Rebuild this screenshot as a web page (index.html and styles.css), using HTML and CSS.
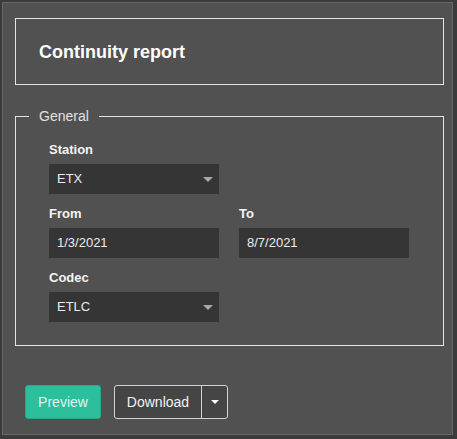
FILE: index.html
```html
<!DOCTYPE html>
<html lang="en">
<head>
    <meta charset="UTF-8">
    <meta name="viewport" content="width=device-width, initial-scale=1.0">
    <title>Continuity report</title>
    <link rel="stylesheet" href="styles.css">
</head>
<body>

    <div class="panel">
        <div class="title-box">
            <h1>Continuity report</h1>
        </div>

        <fieldset class="group">
            <legend>General</legend>
            <div class="form-grid">
                <div class="field">
                    <label>Station</label>
                    <div class="control select">ETX<span class="caret"></span></div>
                </div>
                <div></div>

                <div class="field">
                    <label>From</label>
                    <div class="control">1/3/2021</div>
                </div>
                <div class="field">
                    <label>To</label>
                    <div class="control">8/7/2021</div>
                </div>

                <div class="field">
                    <label>Codec</label>
                    <div class="control select">ETLC<span class="caret"></span></div>
                </div>
            </div>
        </fieldset>

        <div class="actions">
            <button class="btn btn-preview">Preview</button>
            <div class="split">
                <button class="btn btn-download">Download</button>
                <button class="btn btn-toggle"><span class="caret caret-white"></span></button>
            </div>
        </div>
    </div>

</body>
</html>
```

FILE: styles.css
```css
body {
    margin: 0;
    background-color: #3b3b3b;
    font-family: 'Liberation Sans', Arial, sans-serif;
    color: #f0f0f0;
}

/* --- Outer panel --- */
.panel {
    margin: 2px 4px 4px 2px;
    height: 433px;
    box-sizing: border-box;
    border: 1px solid #686868;
    background-color: #515151;
    padding: 15px 8px 0 12px;
}

/* --- Title --- */
.title-box {
    height: 67px;
    box-sizing: border-box;
    border: 1px solid #e4e4e4;
    display: flex;
    align-items: center;
    padding-left: 23px;
    padding-top: 1px;
}

.title-box h1 {
    margin: 0;
    font-size: 18px;
    font-weight: bold;
    color: #ffffff;
}

/* --- General fieldset --- */
.group {
    margin: 23px 0 0 0;
    min-width: 0;
    border: 1px solid #e4e4e4;
    padding: 18px 0 23px 33px;
}

.group legend {
    margin-left: -20px;
    padding: 0 10px;
    font-size: 14px;
    line-height: 16px;
    color: #e2e2e2;
}

.form-grid {
    display: grid;
    grid-template-columns: 170px 170px;
    column-gap: 20px;
    row-gap: 12px;
}

.field label {
    display: block;
    font-size: 13px;
    line-height: 16px;
    font-weight: bold;
    color: #f4f4f4;
    margin-bottom: 6px;
}

.control {
    position: relative;
    height: 30px;
    box-sizing: border-box;
    background-color: #353535;
    padding-left: 8px;
    font-size: 13px;
    line-height: 30px;
    color: #ececec;
}

.caret {
    display: inline-block;
    width: 0;
    height: 0;
    border-left: 5px solid transparent;
    border-right: 5px solid transparent;
    border-top: 5px solid #a8a8a8;
}

.select .caret {
    position: absolute;
    right: 6px;
    top: 13px;
}

/* --- Buttons --- */
.actions {
    display: flex;
    align-items: center;
    margin-top: 39px;
    padding-left: 10px;
    gap: 13px;
}

.btn {
    height: 34px;
    box-sizing: border-box;
    font-family: 'Liberation Sans', Arial, sans-serif;
    font-size: 14px;
    cursor: pointer;
}

.btn-preview {
    width: 76px;
    background-color: #2dbe9c;
    border: 1px solid #28a888;
    border-radius: 3px;
    color: #e0f4ec;
}

.split {
    display: flex;
    height: 34px;
    box-sizing: border-box;
    border: 1px solid #d2d2d2;
    border-radius: 3px;
    background-color: #454545;
    overflow: hidden;
}

.btn-download {
    width: 87px;
    height: 32px;
    border: none;
    border-right: 1px solid #d2d2d2;
    background: transparent;
    color: #f2f2f2;
}

.btn-toggle {
    width: 25px;
    height: 32px;
    border: none;
    background: transparent;
    display: flex;
    align-items: center;
    justify-content: center;
    padding: 0;
}

.caret-white {
    border-left-width: 4px;
    border-right-width: 4px;
    border-top: 4px solid #ffffff;
}
```
